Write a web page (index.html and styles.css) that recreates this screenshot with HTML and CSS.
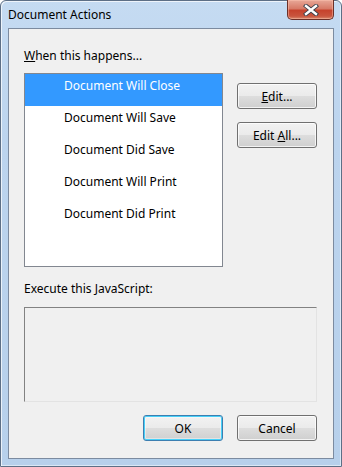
FILE: index.html
```html
<!DOCTYPE html>
<html>
<head>
<meta charset="utf-8">
<link rel="stylesheet" href="styles.css">
</head>
<body>
<div class="window">
  <div class="titlebar">
    <span class="title">Document Actions</span>
    <button class="close" aria-label="Close">
      <svg width="16" height="12" viewBox="0 0 16 12">
        <path d="M3 2 L13 10 M13 2 L3 10" stroke="#3a3f4a" stroke-width="4.2" stroke-linecap="square" fill="none"/>
        <path d="M3 2 L13 10 M13 2 L3 10" stroke="#ffffff" stroke-width="2.4" stroke-linecap="square" fill="none"/>
      </svg>
    </button>
  </div>
  <div class="client">
    <div class="label first"><u>W</u>hen this happens...</div>
    <div class="top-row">
      <ul class="list">
        <li class="item selected">Document Will Close</li>
        <li class="item">Document Will Save</li>
        <li class="item">Document Did Save</li>
        <li class="item">Document Will Print</li>
        <li class="item">Document Did Print</li>
      </ul>
      <div class="side-buttons">
        <button class="btn"><u>E</u>dit...</button>
        <button class="btn">Edit <u>A</u>ll...</button>
      </div>
    </div>
    <div class="label js-label">Execute this JavaScript:</div>
    <div class="script-box"></div>
    <div class="footer">
      <button class="btn default">OK</button>
      <button class="btn">Cancel</button>
    </div>
  </div>
</div>
</body>
</html>
```
FILE: styles.css
```css
html, body {
  margin: 0;
  padding: 0;
  background: #ffffff;
}
body {
  font-family: "Noto Sans", "Open Sans", sans-serif;
  font-size: 12px;
  color: #000;
}
.window {
  width: 342px;
  height: 467px;
  box-sizing: border-box;
  padding: 0 7px 7px 8px;
  display: flex;
  flex-direction: column;
  border: 1px solid #5d6f86;
  border-radius: 6px 6px 0 0;
  background: linear-gradient(to bottom, #c5dbf2 0%, #bcd4ee 30%, #b7d0eb 100%);
  box-shadow: inset 1px 1px 0 rgba(255,255,255,0.7), inset -1px -1px 0 rgba(255,255,255,0.5);
}
.titlebar {
  height: 28px;
  display: flex;
  align-items: flex-start;
  justify-content: space-between;
  margin-top: -1px;
  margin-left: -1px;
}
.title {
  padding-top: 7px;
  line-height: 15px;
  color: #000;
}
.close {
  margin: 0;
  width: 47px;
  height: 20px;
  padding: 0;
  border: 1px solid #6b3028;
  border-top: none;
  border-radius: 0 0 5px 5px;
  background: linear-gradient(to bottom, #e8a898 0%, #d77a67 45%, #c6432d 55%, #c9553e 85%, #d98a6e 100%);
  box-shadow: inset 0 0 0 1px rgba(255,200,180,0.45);
  display: flex;
  align-items: center;
  justify-content: center;
}
.client {
  flex: 1;
  background: #f0f0f0;
  border: 1px solid #7c8ba0;
  margin-left: -1px;
  padding: 17px 16px 0 15px;
  display: flex;
  flex-direction: column;
}
.label {
  height: 15px;
  line-height: 15px;
  color: #000;
}
.label.first {
  margin-top: 2px;
}
.top-row {
  margin-top: 10px;
  display: flex;
  align-items: flex-start;
}
.list {
  list-style: none;
  margin: 0;
  padding: 0;
  width: 199px;
  height: 194px;
  box-sizing: border-box;
  border: 1px solid #828790;
  background: #ffffff;
}
.item {
  height: 32px;
  box-sizing: border-box;
  padding: 4px 0 0 39px;
  line-height: 15px;
  color: #000;
}
.item.selected {
  background: #3399ff;
  color: #ffffff;
}
.side-buttons {
  margin-left: 14px;
  margin-top: 10px;
  display: flex;
  flex-direction: column;
  gap: 13px;
}
.btn {
  width: 80px;
  height: 26px;
  box-sizing: border-box;
  padding: 0;
  font-family: inherit;
  font-size: 12px;
  color: #000;
  border: 1px solid #707070;
  border-radius: 3px;
  background: linear-gradient(to bottom, #f2f2f2 0%, #ebebeb 48%, #dddddd 52%, #cfcfcf 100%);
  box-shadow: inset 0 0 0 1px rgba(255,255,255,0.75);
  line-height: 15px;
}
.btn.default {
  border-color: #3c7fb1;
  box-shadow: inset 0 0 0 1px #48d0f8, inset 0 0 0 2px rgba(255,255,255,0.4);
}
.js-label {
  margin-top: 14px;
}
.script-box {
  margin-top: 11px;
  height: 95px;
  box-sizing: border-box;
  border: 1px solid;
  border-color: #828282 #e3e3e3 #e3e3e3 #828282;
  background: #f0f0f0;
}
.footer {
  margin-top: 13px;
  display: flex;
  justify-content: flex-end;
  gap: 14px;
}
```
